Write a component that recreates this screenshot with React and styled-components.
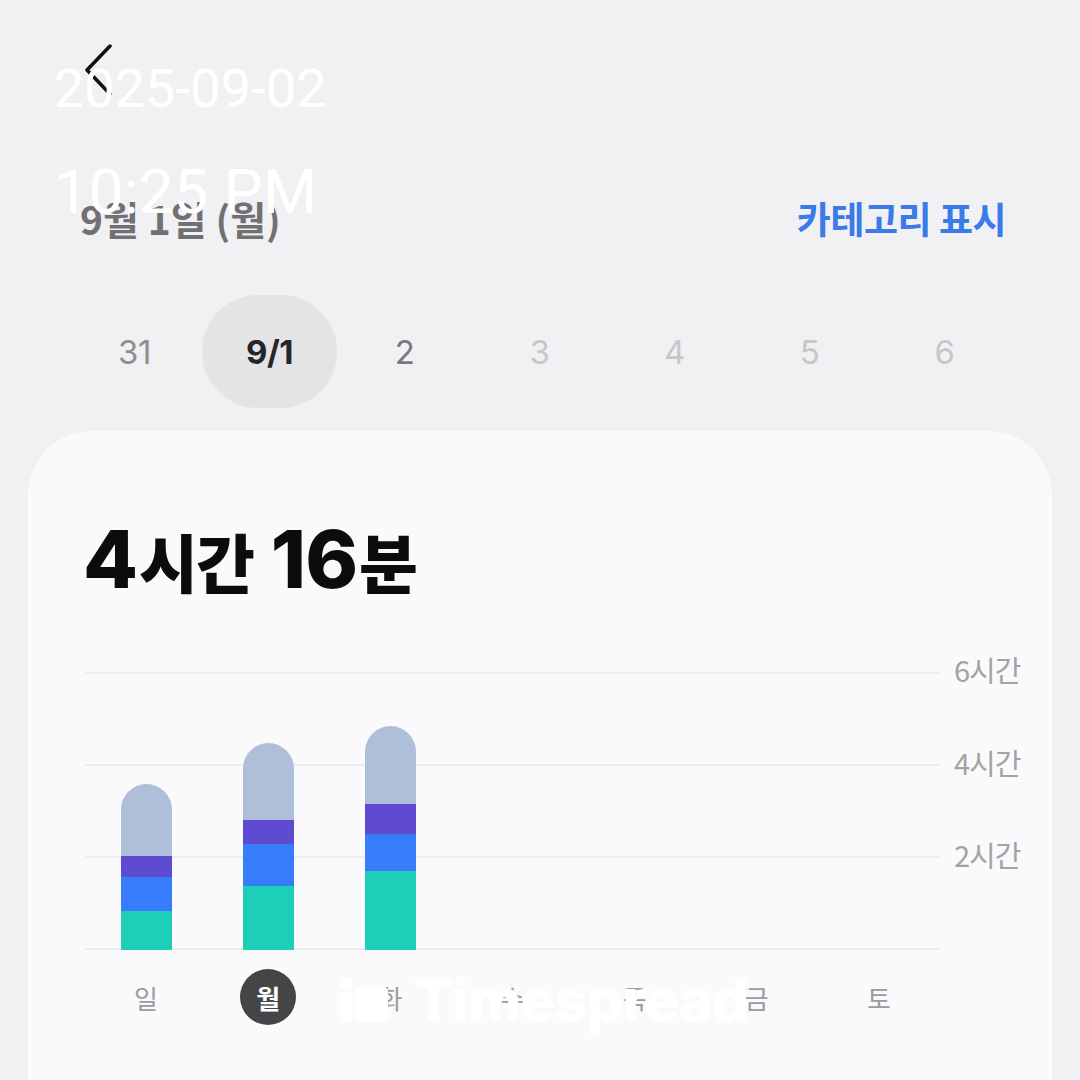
import React from 'react'
import styled, { createGlobalStyle } from 'styled-components'

const GlobalStyle = createGlobalStyle`
  html, body {
    margin: 0;
    padding: 0;
    background: #f1f1f4;
  }
  body {
    font-family: Inter, "Noto Sans CJK KR", sans-serif;
    overflow: hidden;
  }
`

const dates = [
  { label: '31', tone: 'past' },
  { label: '9/1', tone: 'active' },
  { label: '2', tone: 'today' },
  { label: '3', tone: 'future' },
  { label: '4', tone: 'future' },
  { label: '5', tone: 'future' },
  { label: '6', tone: 'future' },
]

const dateColors = {
  past: '#8f8f92',
  active: '#262628',
  today: '#7a7a7d',
  future: '#c7c7ca',
}

// minutes are not real data here, only pixel heights matching the shot
const bars = [
  { day: '일', segs: [72, 21, 34, 39] },
  { day: '월', segs: [77, 24, 42, 64], active: true },
  { day: '화', segs: [78, 30, 37, 79] },
  { day: '수' },
  { day: '목' },
  { day: '금' },
  { day: '토' },
]

const segColors = ['#b0bfd9', '#5f4bd0', '#377cfb', '#1ecfb7']

const axis = ['6시간', '4시간', '2시간']

function App() {
  return (
    <Page>
      <GlobalStyle />
      <TopBar>
        <BackButton aria-label="back">
          <svg width="30" height="54" viewBox="0 0 30 54">
            <path d="M26 2 L3 26 L26 50" fill="none" stroke="#111" strokeWidth="3.5" strokeLinecap="round" strokeLinejoin="round" />
          </svg>
        </BackButton>
      </TopBar>

      <Header>
        <DayTitle>9월 1일 (월)</DayTitle>
        <LinkButton>카테고리 표시</LinkButton>
      </Header>

      <DateStrip>
        {dates.map(d => (
          <DateItem key={d.label} tone={d.tone}>{d.label}</DateItem>
        ))}
      </DateStrip>

      <Card>
        <Total>
          <Big>4</Big><Unit>시간</Unit><Big gap>16</Big><Unit>분</Unit>
        </Total>

        <Chart>
          <Plot>
            <GridLines>
              <GridRow />
              <GridRow />
              <GridRow />
            </GridLines>
            <BarCols>
              {bars.map(b => (
                <BarCol key={b.day}>
                  {b.segs && (
                    <Bar>
                      {b.segs.map((h, i) => (
                        <Seg key={i} color={segColors[i]} style={{ height: h }} />
                      ))}
                    </Bar>
                  )}
                </BarCol>
              ))}
            </BarCols>
          </Plot>
          <AxisCol>
            {axis.map(a => <AxisLabel key={a}>{a}</AxisLabel>)}
          </AxisCol>
          <DayRow>
            {bars.map(b => (
              <DayCell key={b.day}>
                <DayLabel active={b.active}>{b.day}</DayLabel>
              </DayCell>
            ))}
          </DayRow>
        </Chart>
      </Card>

      <Stamp>
        <StampDate>2025-09-02</StampDate>
        <StampTime>10:25 PM</StampTime>
      </Stamp>

      <Watermark>
        <svg width="50" height="44" viewBox="0 0 50 44">
          <rect x="0" y="0" width="12" height="10" rx="2" fill="#fff" />
          <rect x="0" y="14" width="12" height="30" rx="2" fill="#fff" />
          <rect x="16" y="10" width="32" height="34" rx="3" fill="#fff" />
        </svg>
        <WatermarkText>Timespread</WatermarkText>
      </Watermark>
    </Page>
  )
}

const Page = styled.div`
  position: relative;
  width: 1080px;
  height: 1080px;
  overflow: hidden;
  background: #f1f1f4;
`

const TopBar = styled.div`
  height: 120px;
  padding: 44px 0 0 84px;
  box-sizing: border-box;
`

const BackButton = styled.div`
  width: 30px;
  height: 54px;
`

const Header = styled.div`
  display: flex;
  justify-content: space-between;
  align-items: center;
  height: 76px;
  margin-top: 60px;
  padding: 0 74px 0 80px;
`

const DayTitle = styled.div`
  font-family: "Noto Sans CJK KR", sans-serif;
  font-size: 39px;
  font-weight: 700;
  color: #717174;
  letter-spacing: 0;
`

const LinkButton = styled.div`
  font-family: "Noto Sans CJK KR", sans-serif;
  font-size: 37px;
  font-weight: 700;
  color: #3a7be9;
  letter-spacing: -0.5px;
`

const DateStrip = styled.div`
  display: grid;
  grid-template-columns: repeat(7, 135px);
  margin: 39px 0 0 67px;
`

const DateItem = styled.div`
  height: 113px;
  display: flex;
  align-items: center;
  justify-content: center;
  border-radius: 56px;
  font-size: 33px;
  font-weight: ${p => (p.tone === 'active' ? 700 : 400)};
  color: ${p => dateColors[p.tone]};
  background: ${p => (p.tone === 'active' ? '#e4e4e7' : 'transparent')};
  letter-spacing: -0.5px;
`

const Card = styled.div`
  margin: 23px 28px 0;
  height: 700px;
  background: #fafafc;
  border-radius: 64px 64px 0 0;
  padding: 88px 0 0 55px;
  box-sizing: border-box;
`

const Total = styled.div`
  height: 100px;
  color: #0c0c0d;
  font-weight: 800;
  line-height: 1;
  display: flex;
  align-items: baseline;
`

const Big = styled.span`
  font-family: Inter, sans-serif;
  font-size: 80px;
  letter-spacing: -1px;
  margin-left: ${p => (p.gap ? '18px' : '0')};
`

const Unit = styled.span`
  font-family: "Noto Sans CJK KR", sans-serif;
  font-size: 64px;
  letter-spacing: -2px;
  margin-left: 2px;
`

const Chart = styled.div`
  margin-top: 53px;
  margin-left: 2px;
  display: grid;
  grid-template-columns: 855px 1fr;
  grid-template-rows: 278px auto;
`

const Plot = styled.div`
  display: grid;
`

const GridLines = styled.div`
  grid-area: 1 / 1;
  display: grid;
  grid-template-rows: repeat(3, 1fr);
  border-bottom: 2px solid #eeeef1;
`

const GridRow = styled.div`
  border-top: 2px solid #eeeef1;
`

const BarCols = styled.div`
  grid-area: 1 / 1;
  display: grid;
  grid-template-columns: repeat(7, 1fr);
`

const BarCol = styled.div`
  display: flex;
  justify-content: center;
  align-items: flex-end;
`

const Bar = styled.div`
  width: 51px;
  display: flex;
  flex-direction: column;
  border-radius: 26px 26px 0 0;
  overflow: hidden;
`

const Seg = styled.div`
  background: ${p => p.color};
`

const AxisCol = styled.div`
  display: grid;
  grid-template-rows: repeat(3, 1fr);
  padding-left: 14px;
`

const AxisLabel = styled.div`
  font-family: "Noto Sans CJK KR", sans-serif;
  font-size: 29px;
  line-height: 36px;
  height: 36px;
  margin-top: -21px;
  color: #a3a3a6;
  letter-spacing: -1px;
`

const DayRow = styled.div`
  display: grid;
  grid-template-columns: repeat(7, 1fr);
  padding-top: 19px;
`

const DayCell = styled.div`
  display: flex;
  justify-content: center;
`

const DayLabel = styled.div`
  width: 56px;
  height: 56px;
  border-radius: 50%;
  display: flex;
  align-items: center;
  justify-content: center;
  font-family: "Noto Sans CJK KR", sans-serif;
  font-size: 26px;
  font-weight: ${p => (p.active ? 700 : 400)};
  color: ${p => (p.active ? '#ffffff' : '#9c9c9f')};
  background: ${p => (p.active ? '#454547' : 'transparent')};
`

const Stamp = styled.div`
  position: absolute;
  left: 54px;
  top: 62px;
  color: #ffffff;
  font-family: Roboto, "Noto Sans", sans-serif;
  line-height: 1;
`

const StampDate = styled.div`
  font-size: 54px;
`

const StampTime = styled.div`
  margin-top: 45px;
  font-size: 62px;
`

const Watermark = styled.div`
  position: absolute;
  left: 340px;
  top: 978px;
  display: flex;
  align-items: flex-end;
  gap: 24px;
  color: #ffffff;
`

const WatermarkText = styled.div`
  font-family: Inter, sans-serif;
  font-size: 58px;
  font-weight: 800;
  line-height: 44px;
  letter-spacing: -1px;
`

export default App
